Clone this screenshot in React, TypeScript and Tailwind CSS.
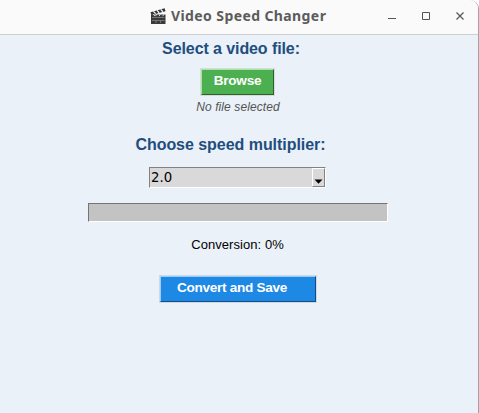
import React from "react";

function Clapper() {
  return (
    <svg width="16" height="17" viewBox="0 0 16 17" className="shrink-0">
      <path d="M0.5 4.2 14.6 0.3 15.5 3.2 1.4 7Z" fill="#333" />
      <path d="M3.4 3.4 5.6 5.6M7 2.4 9.2 4.7M10.7 1.4 12.9 3.7" stroke="#fafafa" strokeWidth="1.3" />
      <path d="M1 6.5H15.5V16H1Z" fill="#3a3a3a" />
      <path d="M3.2 6.2 4.8 8M6.8 6.2 5.4 8.2M10.4 6.2 9 8.2M14 6.2 12.6 8.2" stroke="#ddd" strokeWidth="1" />
      <path d="M2 9.5H14.5M2 12.5H14.5M6 12.5V15M10.5 12.5V15" stroke="#858585" strokeWidth="0.8" />
    </svg>
  );
}

function TitleBar() {
  return (
    <header className="flex h-[35px] shrink-0 items-start border-b border-[#cfcfcf] bg-[#fafafa] pl-[150px]">
      <div className="flex h-[32px] w-[220px] items-center">
        <Clapper />
        <h1 className="ml-[5px] whitespace-nowrap font-['Noto_Sans',sans-serif] text-[14px] font-bold leading-[20px] tracking-[0.4px] text-[#5c5c5c]">
          Video Speed Changer
        </h1>
      </div>
      <svg width="108" height="34" viewBox="370 0 108 34" fill="none" stroke="#555">
        <path d="M388 18.5H396" />
        <path d="M422.5 12.5H429.5V19.5H422.5Z" />
        <path d="M456.5 12.5 463.5 19.5M463.5 12.5 456.5 19.5" strokeWidth="1.2" />
      </svg>
    </header>
  );
}

export default function App() {
  return (
    <div className="flex h-[413px] w-[479px] flex-col overflow-hidden rounded-tl-[3px] rounded-tr-[9px] border-r border-[#a3a3a3] bg-[#eaf1f8] font-['Liberation_Sans',Arial,sans-serif]">
      <TitleBar />
      <main className="flex w-[476px] flex-1 flex-col items-center">
        <h2 className="ml-[-14px] mt-[5px] whitespace-nowrap text-[16px] font-bold leading-[18px] tracking-[-0.09px] text-[#1f4e7e]">
          Select a video file:
        </h2>
        <button className="ml-[-1px] mt-[10px] h-[28px] w-[75px] border border-[#d9d9d9]">
          <span className="flex h-full w-full items-start justify-center border border-b-[#2a622c] border-l-[#a2e5a4] border-r-[#2a622c] border-t-[#a2e5a4] bg-[#4caf50] pt-[3px] text-[13.6px] font-bold leading-[15px] tracking-[-0.3px] text-white">
            Browse
          </span>
        </button>
        <p className="mt-[4px] whitespace-nowrap text-[12px] italic leading-[14px] tracking-[0.1px] text-[#555]">No file selected</p>
        <h2 className="ml-[-15px] mt-[22px] whitespace-nowrap text-[16px] font-bold leading-[18px] tracking-[-0.04px] text-[#1f4e7e]">
          Choose speed multiplier:
        </h2>
        <div className="ml-[-1px] mt-[13px] flex h-[21px] w-[177px] border border-b-white border-l-[#828282] border-r-white border-t-[#828282] bg-[#d9d9d9]">
          <span className="flex-1 pl-[1px] font-['DejaVu_Sans',sans-serif] text-[13.3px] leading-[19px] text-black">2.0</span>
          <span className="flex w-[13px] items-end justify-center border border-b-[#828282] border-l-white border-r-[#828282] border-t-white pb-[2px]">
            <svg width="9" height="5" viewBox="0 0 9 5">
              <path d="M0.5 0.5H8.5L4.5 4.8Z" fill="#000" />
            </svg>
          </span>
        </div>
        <div className="mt-[15px] h-[19px] w-[300px] border border-b-white border-l-[#747474] border-r-white border-t-[#747474] bg-[#c3c3c3]" />
        <p className="ml-[-1px] mt-[15px] whitespace-nowrap text-[13px] leading-[15px] tracking-[0.06px] text-black">Conversion: 0%</p>
        <button className="mt-[23px] h-[28px] w-[158px] border border-[#d0d9e2]">
          <span className="flex h-full w-full items-start border border-b-[#124d85] border-l-[#9bcdfa] border-r-[#124d85] border-t-[#9bcdfa] bg-[#1e88e5] pl-[16px] pt-[3px] text-[13.6px] font-bold leading-[15px] tracking-[-0.3px] text-white">
            Convert and Save
          </span>
        </button>
      </main>
    </div>
  );
}
